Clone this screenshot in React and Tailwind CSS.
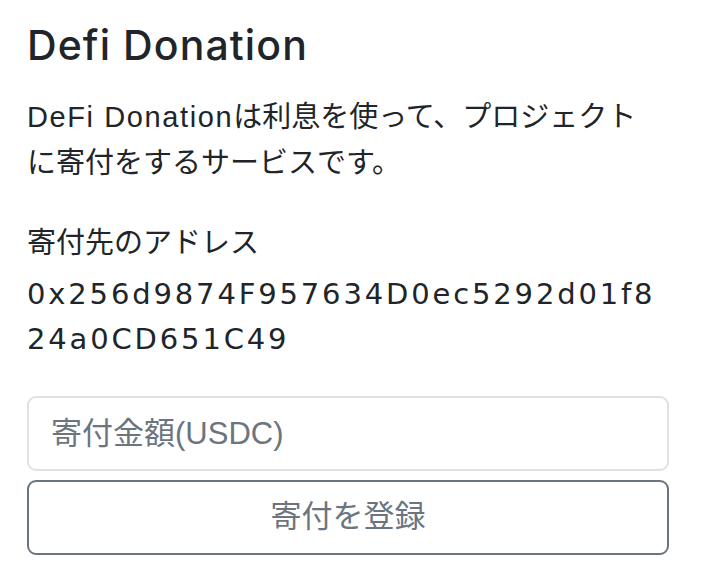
import React from "react";

const font = {
  fontFamily: '"Liberation Sans", "Noto Sans CJK JP", sans-serif',
};

const titleFont = {
  fontFamily: 'Inter, "Noto Sans CJK JP", sans-serif',
};

const addressFont = {
  fontFamily: '"DejaVu Sans", "Noto Sans CJK JP", sans-serif',
};

export default function App() {
  return (
    <div className="min-h-[576px] w-[706px] bg-white text-[#212529]" style={font}>
      <div className="w-[669px] pl-[27px] pt-[20px]">
        <h4 className="text-[41px] leading-[50px] font-medium tracking-[1.1px]" style={titleFont}>
          Defi Donation
        </h4>

        <p className="mt-[24px] text-[29px] leading-[46px]">
          <span className="tracking-[1.6px]">DeFi Donation</span>は利息を使って、プロジェクト
          <br />
          に寄付をするサービスです。
        </p>

        <div className="mt-[34px] text-[29px] leading-[46px]">寄付先のアドレス</div>
        <div className="mt-[6px] text-[29px] leading-[45px] tracking-[2.85px]" style={addressFont}>
          0x256d9874F957634D0ec5292d01f8
          <br />
          24a0CD651C49
        </div>

        <div className="mt-[34px] flex w-[642px] flex-col gap-[9px]">
          <input
            type="text"
            placeholder="寄付金額(USDC)"
            className="h-[75px] w-full rounded-[9px] border-2 border-[#dee2e6] bg-white px-[22px] text-[31px] text-[#212529] outline-none placeholder:text-[#6c757d]"
            style={font}
          />
          <button
            type="button"
            className="h-[75px] w-full rounded-[9px] border-2 border-[#6c757d] bg-white text-[31px] text-[#6c757d]"
            style={font}
          >
            寄付を登録
          </button>
        </div>
      </div>
    </div>
  );
}
